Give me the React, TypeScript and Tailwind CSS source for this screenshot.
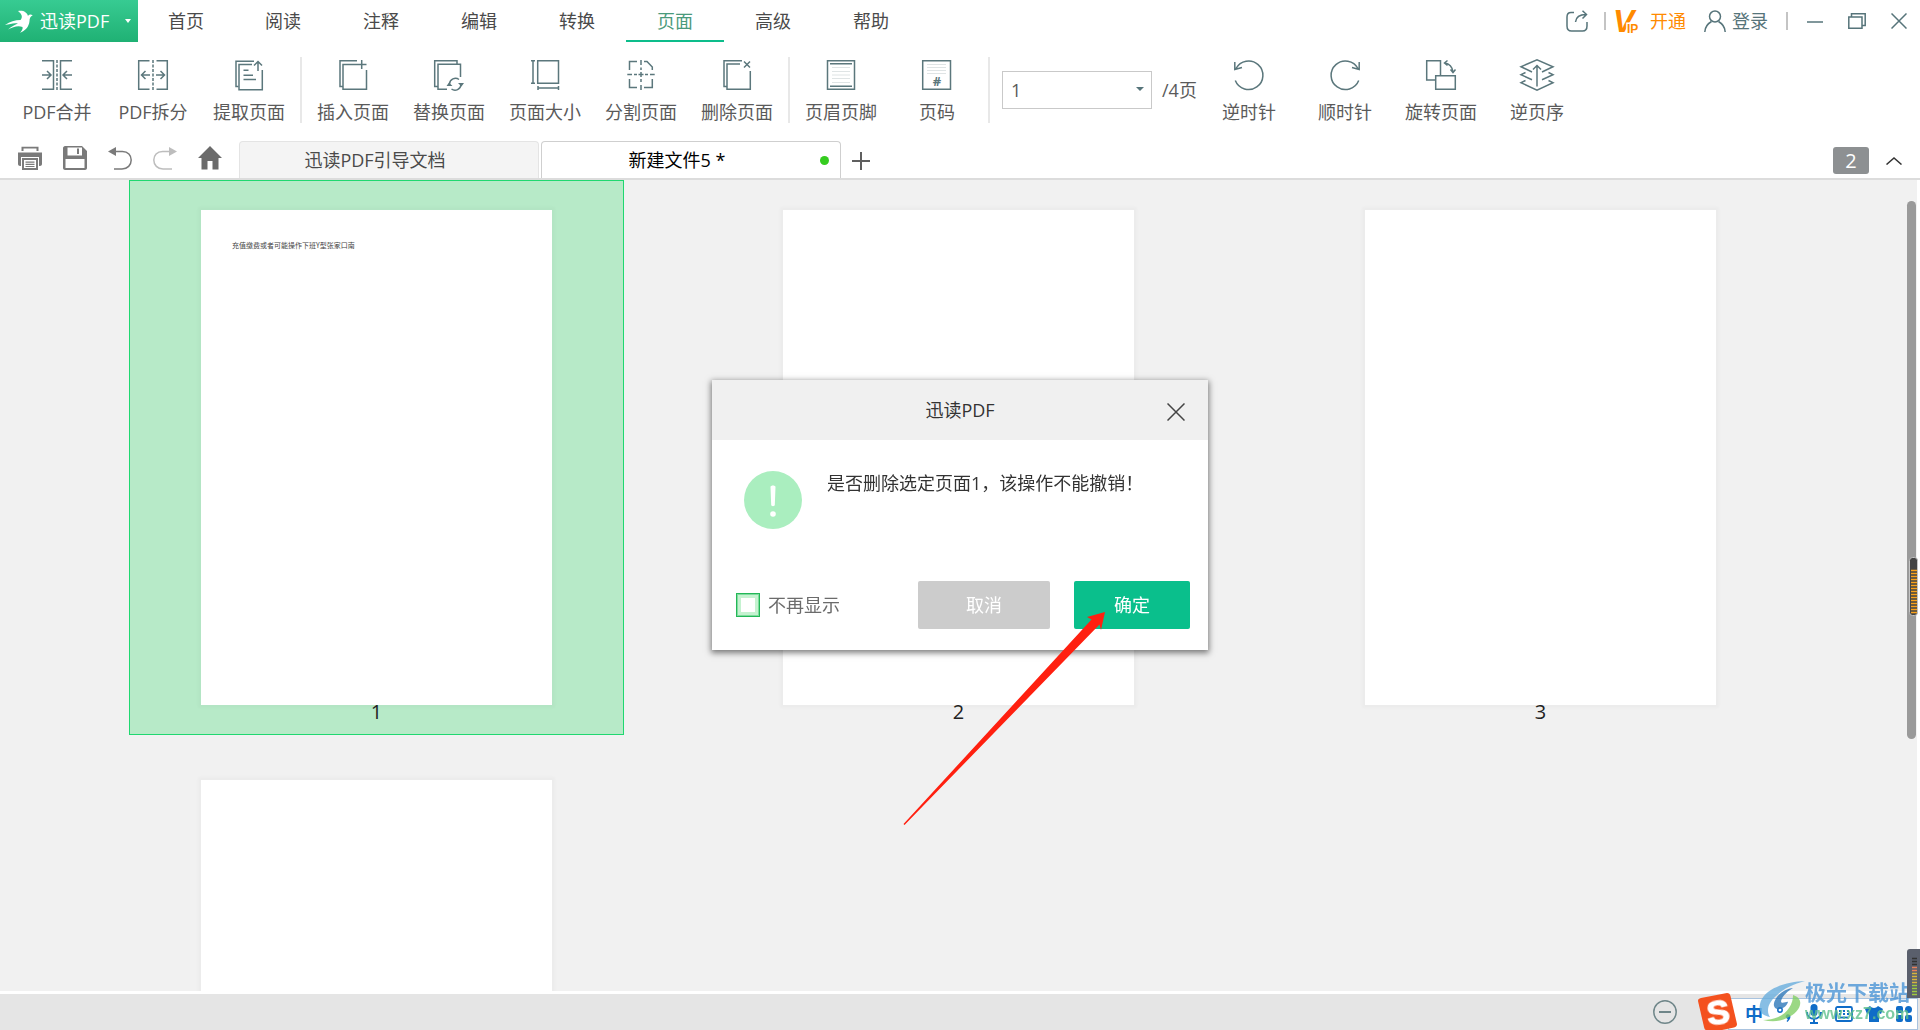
import { useState, type ReactNode } from 'react';

const MENUS = ['首页', '阅读', '注释', '编辑', '转换', '页面', '高级', '帮助'];

function Icon({ children, wide = false }: { children: ReactNode; wide?: boolean }) {
  return (
    <svg
      className={wide ? 'h-[30px] w-[34px]' : 'h-[30px] w-[30px]'}
      viewBox={wide ? '0 1 34 30' : '0 0 30 30'}
      overflow="visible"
      fill="none"
      stroke="#5b777c"
      strokeWidth="1.5"
      aria-hidden="true"
    >
      {children}
    </svg>
  );
}

const splitTools = [
  {
    label: 'PDF合并',
    icon: (
      <Icon>
        <path d="M0 .7H11.5V29.3H0M30 .7H18.5V29.3H30" />
        <path d="M15 0V30" strokeDasharray="3 1.5" />
        <path d="M0 15H8.5M5 11L9 15L5 19M30 15H21.5M25 11L21 15L25 19" />
      </Icon>
    ),
  },
  {
    label: 'PDF拆分',
    icon: (
      <Icon>
        <path d="M11.5 .7H.7V29.3H11.5M18.5 .7H29.3V29.3H18.5" />
        <path d="M15 0V30" strokeDasharray="3 1.5" />
        <path d="M12 15H4M7.500 11L3.500 15L7.500 19M18 15H26M22.500 11L26.500 15L22.500 19" />
      </Icon>
    ),
  },
  {
    label: '提取页面',
    icon: (
      <Icon>
        <path d="M20 1.200H2V26.500H4.500" />
        <path d="M18 4.500H5V29.800H28.300V10" />
        <path d="M24 11V2M20 5.500L24 1.500L28 5.500M9.500 10.300H14.500M9.500 15.300H19M9.500 19.500H22" />
      </Icon>
    ),
  },
];

const editTools = [
  {
    label: '插入页面',
    icon: (
      <Icon>
        <path d="M19 .7H2V26.500H5" />
        <path d="M19 4.500H5V29.300H28.500V10M23.700 0V9M19 4.500H28.500" />
      </Icon>
    ),
  },
  {
    label: '替换页面',
    icon: (
      <Icon>
        <path d="M23 4V.7H.7V26.500H4" />
        <path d="M26.500 17V4.300H4V29.300H13" />
        <path d="M15.500 24A6 6 0 0 1 25 19.500M27 24.500A6 6 0 0 1 17.500 29" />
        <path d="M24 23H30L27.500 26.500ZM12.500 26H18.500L15 22.500Z" fill="#5b777c" stroke="none" />
      </Icon>
    ),
  },
  {
    label: '页面大小',
    icon: (
      <Icon>
        <path d="M7.700 .7H28.500V23.300H7.700ZM3 .7V23.300M1 .7H5M1 23.300H5M8 28H28.500M8 26V30M28.500 26V30" />
      </Icon>
    ),
  },
  {
    label: '分割页面',
    icon: (
      <Icon>
        <path d="M3.500 10V1.500H11M18 1.500H21L26.300 7V10M3.500 19V27.500H11M18 27.500H26.300V19" />
        <path d="M15 0V5M15 7.500V10M15 12V17M15 19V22M15 25V30M1.300 14.500H6M8 14.500H11M12.500 14.500H17.500M19 14.500H22M24 14.500H28.700" />
      </Icon>
    ),
  },
  {
    label: '删除页面',
    icon: (
      <Icon>
        <path d="M20 .7H2V26.500H5" />
        <path d="M18 4H5V29.300H28.300V11M22 1.500L28 7.500M28 1.500L22 7.500" />
      </Icon>
    ),
  },
];

const markTools = [
  {
    label: '页眉页脚',
    icon: (
      <Icon>
        <path d="M1.500 .7H28.500V29.300H1.500Z" />
        <path d="M4 3.700H26M4 26.300H26" />
        <path d="M6 7.500H24M6 11.500H24M6 15H24M6 18.500H24M6 22.500H24" stroke="#dfe4e5" strokeWidth="1" />
      </Icon>
    ),
  },
  {
    label: '页码',
    icon: (
      <Icon>
        <path d="M.7 .7H28.500V29.300H.7Z" />
        <path d="M5 4.500H24M5 7.500H24M5 10.500H24M5 13.500H24" stroke="#dfe4e5" strokeWidth="1" />
        <text x="15" y="26" textAnchor="middle" fontSize="13" fontWeight="700" fill="#5b777c" stroke="none">
          #
        </text>
      </Icon>
    ),
  },
];

const rotateTools = [
  {
    label: '逆时针',
    icon: (
      <Icon>
        <path d="M1.300 20.500A14.300 14.300 0 1 0 2 8.500M.8 2V9.500L8 7.500" />
      </Icon>
    ),
  },
  {
    label: '顺时针',
    icon: (
      <Icon>
        <path d="M28.700 20.500A14.300 14.300 0 1 1 28 8.500M29.200 2V9.500L22 7.500" />
      </Icon>
    ),
  },
  {
    label: '旋转页面',
    icon: (
      <Icon>
        <path d="M9 20H.7V.7H14.500V15.500M9.700 15.700H29.300V29.300H9.700Z" />
        <path d="M19 3C23 3.500 26.500 7 27 12M21.500 .5L18.500 3L21.500 5.500M24.500 9.500L27 12.500L29.500 9.500" />
      </Icon>
    ),
  },
  {
    label: '逆页序',
    icon: (
      <Icon wide>
        <path d="M12 13L1 7.700L17 .8L33 7.700L22 13M5.500 13.500L1 15.700L12 20.700M28.500 13.500L33 15.700L22 20.700M5.500 21.500L1 23.700L17 31.200L33 23.700L28.500 21.500M17 27.500V6.500M13 10.500L17 6.500L21 10.500" />
      </Icon>
    ),
  },
];

function ToolGroup({ tools }: { tools: { label: string; icon: ReactNode }[] }) {
  return (
    <div className="flex shrink-0 pt-1.5">
      {tools.map((t) => (
        <button key={t.label} type="button" className="flex w-24 flex-col items-center gap-2 text-[#5a5a5a]">
          {t.icon}
          <span className="leading-7">{t.label}</span>
        </button>
      ))}
    </div>
  );
}

function Separator() {
  return <div className="mx-[3px] h-[66px] w-0.5 shrink-0 bg-[#e8e8e8]" />;
}

function TitleBar() {
  return (
    <header className="flex h-[42px] shrink-0">
      <button
        type="button"
        className="flex w-[138px] shrink-0 items-center bg-gradient-to-b from-[#37cb92] to-[#1fb174] pl-1 text-white"
      >
        <svg className="h-6 w-8" viewBox="0 0 32 24" fill="#fff" aria-hidden="true">
          <path d="M14 2C19 1 23 3 24 7C25 5.500 27 5 28.700 6.500C26.500 7.500 25.500 9 25.500 12C25 18 21 22 16 23.700C18 21.500 19 20 18.500 18C14 16 9 18 4 20.500C8 17 11 16 14 14.500C10 13.500 6 15 1 16C6 12.500 11 11 16.500 11C19 8 18 5 14 2Z" />
        </svg>
        <span className="ml-1">迅读PDF</span>
        <svg className="ml-4 h-1 w-1.5" viewBox="0 0 6 4" fill="#fff" aria-hidden="true">
          <path d="M0 0H6L3 4Z" />
        </svg>
      </button>
      <nav className="flex text-[#4a4a4a]">
        {MENUS.map((m) => (
          <button
            key={m}
            type="button"
            className={`w-[98px] border-b-2 pt-0.5 first:w-24 ${
              m === '页面' ? 'border-[#0dbd8b] text-[#4a9a7c]' : 'border-transparent'
            }`}
          >
            {m}
          </button>
        ))}
      </nav>
      <div className="ml-auto flex items-center pr-[13px] text-[#56747a]">
        <button type="button" aria-label="分享">
          <svg className="h-[22px] w-[22px]" viewBox="0 0 22 22" fill="none" stroke="#56747a" strokeWidth="1.5">
            <path d="M8 2.500H5C2 2.500 1 4.500 1 7V16C1 19 2.500 21 5.500 21H16.500C19.500 21 21 19 21 16V12" />
            <path d="M9.500 12C10 7 13 4.500 20 4.500M16.500 .8L20.500 4.500L16.500 8.500" />
          </svg>
        </button>
        <span className="ml-4 h-[18px] w-0.5 bg-[#c4c4c4]" />
        <button type="button" className="ml-2 flex items-center gap-2 text-[#ff8a00]">
          <svg className="h-6 w-7" viewBox="0 0 28 24" fill="#ff8a00" overflow="visible" aria-hidden="true">
            <text x="-1" y="23" fontFamily="Liberation Sans" fontSize="32" fontWeight="700" fontStyle="italic">
              V
              <tspan x="13" y="24" fontSize="12" fontStyle="normal" stroke="#fff" strokeWidth="3" paintOrder="stroke">
                IP
              </tspan>
            </text>
          </svg>
          <span>开通</span>
        </button>
        <button type="button" className="ml-[18px] flex items-center gap-1.5">
          <svg className="h-[22px] w-[22px]" viewBox="0 0 22 22" fill="none" stroke="#56747a" strokeWidth="1.5" aria-hidden="true">
            <circle cx="11" cy="6.500" r="5.500" />
            <path d="M.8 22C1 16 4 13.500 7.500 11.500M21.200 22C21 16 18 13.500 14.500 11.500" />
          </svg>
          <span>登录</span>
        </button>
        <span className="ml-[18px] h-[18px] w-0.5 bg-[#c4c4c4]" />
        <button type="button" aria-label="最小化" className="ml-[19px]">
          <svg className="h-4 w-4" viewBox="0 0 16 16" stroke="#56747a" strokeWidth="1.500">
            <path d="M0 9H16" />
          </svg>
        </button>
        <button type="button" aria-label="还原" className="ml-[25px]">
          <svg className="h-4 w-[18px]" viewBox="0 0 18 16" fill="none" stroke="#56747a" strokeWidth="1.500">
            <path d="M.8 4H14V15.200H.8ZM3.500 4V.8H17.200V12.500H14" />
          </svg>
        </button>
        <button type="button" aria-label="关闭" className="ml-[25px]">
          <svg className="h-4 w-4" viewBox="0 0 16 16" stroke="#56747a" strokeWidth="1.500">
            <path d="M.5 .5L15.500 15.500M15.500 .5L.5 15.500" />
          </svg>
        </button>
      </div>
    </header>
  );
}

function Ribbon() {
  const [page, setPage] = useState('1');
  return (
    <div className="flex h-24 shrink-0 items-center pl-[9px]">
      <ToolGroup tools={splitTools} />
      <Separator />
      <ToolGroup tools={editTools} />
      <Separator />
      <ToolGroup tools={markTools} />
      <Separator />
      <div className="flex w-52 shrink-0 items-center pl-[9px] text-[#5a5a5a]">
        <div className="relative">
          <select
            aria-label="页码"
            value={page}
            onChange={(e) => setPage(e.target.value)}
            className="block h-[38px] w-[150px] appearance-none border border-[#c9c9c9] bg-white pl-2 outline-none"
          >
            <option>1</option>
            <option>2</option>
            <option>3</option>
            <option>4</option>
          </select>
          <svg className="pointer-events-none absolute top-4 right-2 h-1 w-2" viewBox="0 0 8 4" fill="#56747a">
            <path d="M0 0H8L4 4Z" />
          </svg>
        </div>
        <span className="ml-2.5">/4页</span>
      </div>
      <ToolGroup tools={rotateTools} />
    </div>
  );
}

function TabBar() {
  return (
    <div className="flex h-[42px] shrink-0 border-b-2 border-[#dcdcdc] pt-[3px]">
      <div className="flex w-[239px] shrink-0 items-center gap-[21px] pb-1 pl-[18px]">
        <button type="button" aria-label="打印">
          <svg className="h-6 w-6" viewBox="0 0 24 24" fill="#7a7a7a">
            <path d="M3.500 5V.7H20.500V5H18.500V2.500H5.500V5ZM0 6.500H24V18C24 19 23 20 22 20H21V11H3V20H2C1 20 0 19 0 18Z" />
            <path d="M4 12H20V24H4ZM6 14V22H18V14ZM7.500 15.500H16.500V16.700H7.500ZM7.500 17.700H16.500V18.900H7.500ZM7.500 20H16.500V21H7.500Z" fillRule="evenodd" />
          </svg>
        </button>
        <button type="button" aria-label="保存">
          <svg className="h-6 w-6" viewBox="0 0 24 24" fill="#7a7a7a">
            <path d="M2 0H19L24 5V22C24 23 23 24 22 24H2C1 24 0 23 0 22V2C0 1 1 0 2 0ZM4.500 1.500V9.500H19V1.500ZM14 2.500H16V8H14ZM2.500 13V22H21.500V13Z" fillRule="evenodd" />
          </svg>
        </button>
        <button type="button" aria-label="撤销">
          <svg className="h-6 w-6" viewBox="0 0 24 24" fill="none" stroke="#7a7a7a" strokeWidth="1.500">
            <path d="M6 5.500H14.500C20 5.500 23.200 9.500 23.200 14C23.200 19 19.500 23 14 23H6" />
            <path d="M0 5.500L8 1V10Z" fill="#7a7a7a" stroke="none" />
          </svg>
        </button>
        <button type="button" aria-label="重做">
          <svg className="h-6 w-6" viewBox="0 0 24 24" fill="none" stroke="#bdbdbd" strokeWidth="1.500">
            <path d="M18 5.500H9.500C4 5.500 .8 9.500 .8 14C.8 19 4.500 23 10 23H19" />
            <path d="M24 5.500L16 1V10Z" fill="#bdbdbd" stroke="none" />
          </svg>
        </button>
        <button type="button" aria-label="主页">
          <svg className="h-6 w-6" viewBox="0 0 24 24" fill="#6b6b6b">
            <path d="M12 0L24 12H20.500V23.500H14.500V15H9.500V23.500H3.500V12H0Z" />
          </svg>
        </button>
      </div>
      <button
        type="button"
        className="w-[300px] shrink-0 rounded-t border border-b-0 border-[#e4e4e4] bg-[#f4f4f4] pr-7 text-[#4a4a4a]"
      >
        迅读PDF引导文档
      </button>
      <button
        type="button"
        className="relative ml-0.5 w-[300px] shrink-0 rounded-t border border-b-0 border-[#cfcfcf] bg-white pr-7 text-black"
      >
        新建文件5 *
        <span className="absolute top-3.5 right-[11px] h-[9px] w-[9px] rounded-full bg-[#35cc1f]" />
      </button>
      <button type="button" aria-label="新建标签" className="ml-[11px] pt-0.5">
        <svg className="h-[18px] w-[18px]" viewBox="0 0 18 18" stroke="#5f5f5f" strokeWidth="2">
          <path d="M9 0V18M0 9H18" />
        </svg>
      </button>
      <div className="ml-auto flex items-center gap-[17px] pt-0.5 pr-[18px]">
        <span className="flex h-[27px] w-9 items-center justify-center rounded-[3px] bg-[#8d9092] text-xl text-white">2</span>
        <button type="button" aria-label="收起">
          <svg className="h-2 w-4" viewBox="0 0 16 8" fill="none" stroke="#333" strokeWidth="1.500">
            <path d="M.5 7.500L8 1L15.500 7.500" />
          </svg>
        </button>
      </div>
    </div>
  );
}

function Thumbnail({ page, selected = false }: { page: number; selected?: boolean }) {
  return (
    <div
      className={`flex h-[555px] w-[495px] flex-col items-center border pt-[29px] ${
        selected ? 'border-[#1fd870] bg-[#b7eac8]' : 'border-transparent'
      }`}
    >
      <div className="h-[495px] w-[351px] shrink-0 bg-white shadow-[0_0_3px_3px_rgba(0,0,0,0.025)]">
        {page === 1 && (
          <p className="pt-[29px] pl-[31px] text-[7px] leading-3 font-[Noto_Sans_CJK_SC] text-[#444]">
            充值缴费或者可能操作下班Y型张家口南
          </p>
        )}
      </div>
      <span className="text-xl leading-[14px] text-[#222]">{page}</span>
    </div>
  );
}

function Workspace() {
  return (
    <main className="flex min-h-0 flex-1 pr-[3px]">
      <div className="relative flex-1 overflow-hidden bg-[#f1f1f1]">
        <div className="grid grid-cols-[repeat(3,495px)] justify-center gap-x-[87px] gap-y-[15px]">
          <Thumbnail page={1} selected />
          <Thumbnail page={2} />
          <Thumbnail page={3} />
          <Thumbnail page={4} />
        </div>
        <div className="absolute top-[21px] right-px h-[538px] w-[9px] rounded-full bg-[#9a9a9a]" />
      </div>
    </main>
  );
}

function StatusBar() {
  return (
    <footer className="flex h-[39px] shrink-0 items-center justify-end border-t-[3px] border-white bg-[#e5e5e5] pr-[243px]">
      <button type="button" aria-label="缩小">
        <svg className="h-6 w-6" viewBox="0 0 24 24" fill="none" stroke="#6f8689" strokeWidth="1.500">
          <circle cx="12" cy="12" r="11.200" />
          <path d="M6 12H18" strokeWidth="2" />
        </svg>
      </button>
    </footer>
  );
}

function ConfirmDialog() {
  const [hide, setHide] = useState(false);
  return (
    <div className="fixed inset-0 z-10 flex items-center justify-center">
      <div
        role="dialog"
        aria-labelledby="dialog-title"
        className="relative w-[496px] bg-white shadow-[0_2px_6px_1px_rgba(0,0,0,0.5)]"
      >
        <div className="grid h-[60px] grid-cols-[1fr_auto_1fr] items-center bg-[#f0f0f0] text-[#333]">
          <h2 id="dialog-title" className="col-start-2">
            迅读PDF
          </h2>
          <button type="button" aria-label="关闭" className="mr-[23px] justify-self-end pt-1">
            <svg className="h-[18px] w-[18px]" viewBox="0 0 18 18" stroke="#444" strokeWidth="1.500">
              <path d="M.5 .5L17.500 17.500M17.500 .5L.5 17.500" />
            </svg>
          </button>
        </div>
        <div className="flex h-[141px] gap-[25px] pt-[31px] pl-8">
          <svg className="h-[58px] w-[58px]" viewBox="0 0 58 58" aria-hidden="true">
            <circle cx="29" cy="29" r="29" fill="#aaeebf" />
            <path d="M26.500 16C26.500 14 31.500 14 31.500 16L30.800 34C30.800 35.500 27.200 35.500 27.200 34Z" fill="#fff" />
            <circle cx="29" cy="43" r="2.800" fill="#fff" />
          </svg>
          <p className="leading-6 text-[#333]">是否删除选定页面1，该操作不能撤销！</p>
        </div>
        <div className="flex items-center pr-[18px] pb-[21px] pl-6 text-white">
          <label className="flex items-center gap-2 text-[#6b6b6b]">
            <input
              type="checkbox"
              checked={hide}
              onChange={(e) => setHide(e.target.checked)}
              className="h-6 w-6 appearance-none border border-[#23b757] bg-white shadow-[inset_0_0_0_1px_#7fdc9e,inset_0_0_0_4px_#c5f2d0] checked:bg-[#23b757]"
            />
            不再显示
          </label>
          <button type="button" className="ml-auto h-12 w-33 rounded-xs bg-[#ccc]">
            取消
          </button>
          <button type="button" className="ml-6 h-12 w-29 rounded-xs bg-[#0abf8c]">
            确定
          </button>
        </div>
        {/* pointer to the confirm button */}
        <svg
          className="pointer-events-none absolute top-[230px] left-[190px] h-[216px] w-[206px]"
          viewBox="0 0 206 216"
          fill="#ff2010"
          aria-hidden="true"
        >
          <path d="M203 2L185 7L189.500 9.500L1.500 214L2.500 215L197.500 14.500L199 20Z" />
        </svg>
      </div>
    </div>
  );
}

function LevelMeters() {
  const bars = Array.from({ length: 15 }, (_, i) => i);
  return (
    <>
      <svg className="fixed top-[557px] right-[2px] z-20 h-[59px] w-[9px]" viewBox="0 0 9 59" aria-hidden="true">
        <rect x=".5" y=".5" width="8" height="58" rx="3" fill="#444" stroke="#c4c4c4" />
        {bars.map((i) => (
          <path key={i} d={`M2 ${13.5 + i * 3}H8`} stroke="#f9a11b" strokeWidth="1.500" />
        ))}
      </svg>
      <svg className="fixed right-0 bottom-8 z-20 h-[49px] w-[13px]" viewBox="0 0 13 49" aria-hidden="true">
        <path d="M13 0H3C1 0 0 1 0 3V49H13Z" fill="#5a5f6c" />
        {bars.slice(0, 13).map((i) => (
          <path
            key={i}
            d={`M5 ${9.5 + i * 3}H10`}
            stroke={i < 3 ? '#333' : i < 5 ? '#e8805a' : i < 9 ? '#d8b43c' : '#9fca3f'}
            strokeWidth="1.500"
          />
        ))}
      </svg>
    </>
  );
}

function InputMethodBar() {
  return (
    <div className="fixed right-0 bottom-0 z-10 flex items-end text-[#0f6cc8]">
      <svg className="z-10 -mr-2.5 h-[37px] w-10" viewBox="0 0 40 37" overflow="visible" aria-hidden="true">
        <path d="M3 5L29 0C31 0 32 1 32.500 3L39 31C39 33 38 34 36 34.500L24 37H8C7 37 6.500 36 6 34L0 8C0 6 1 5.500 3 5Z" fill="#f4511e" />
        <text
          x="20"
          y="31"
          textAnchor="middle"
          fontFamily="Liberation Sans"
          fontSize="34"
          fontWeight="700"
          fill="#fff"
          stroke="#fff"
          strokeWidth="1.500"
          transform="rotate(-8 20 19)"
        >
          S
        </text>
      </svg>
      <div className="mr-0.5 flex h-8 w-[190px] items-center justify-end gap-3 border border-[#a9c3df] bg-white pr-1">
        <span className="w-[18px] font-bold">中</span>
        <svg className="h-4 w-[18px]" viewBox="0 0 18 16" fill="#0f6cc8" aria-hidden="true">
          <circle cx="5" cy="4" r="2.200" fill="none" stroke="#0f6cc8" strokeWidth="1.500" />
          <path d="M12 8.500C16 7.500 17 12 12.500 16L11.500 15C13 14 13 13 12 12.500C10 11.500 10.500 9 12 8.500Z" />
        </svg>
        <svg className="h-5 w-[18px]" viewBox="0 0 18 20" aria-hidden="true">
          <rect x="5.500" y="0" width="7" height="12" rx="3.500" fill="#0f6cc8" />
          <path d="M2 8C2 17 16 17 16 8M9 15V19M5 19H13" fill="none" stroke="#0f6cc8" strokeWidth="2" />
        </svg>
        <svg className="h-4 w-[18px]" viewBox="0 0 18 16" fill="none" stroke="#0f6cc8" strokeWidth="1.800" aria-hidden="true">
          <rect x="1" y="1" width="16" height="14" rx="1.500" />
          <path d="M4 5H14M4 8H14" strokeDasharray="2 2" />
          <path d="M5 11.500H13" />
        </svg>
        <svg className="h-4 w-[18px]" viewBox="0 0 18 16" fill="#0f6cc8" aria-hidden="true">
          <path d="M5 0C7 2.500 11 2.500 13 0L18 3L16 8L14 7V16H4V7L2 8L0 3Z" />
        </svg>
        <svg className="h-4 w-[18px]" viewBox="0 0 18 16" fill="#0f6cc8" aria-hidden="true">
          <rect x="1" width="7" height="7" rx="2" />
          <circle cx="13.500" cy="3.500" r="3.500" />
          <rect x="1" y="9" width="7" height="7" rx="2" />
          <rect x="10" y="9" width="7" height="7" rx="2" />
        </svg>
      </div>
    </div>
  );
}

function Watermark() {
  return (
    <div className="pointer-events-none fixed right-2.5 bottom-1.5 z-10 flex items-center font-bold opacity-80">
      <svg className="h-[42px] w-[46px]" viewBox="0 0 46 42" aria-hidden="true">
        <path d="M46 0C27 1 5 7 1 23C-1 31 4 35 11 36C7 30 9 22 17 15C25 7 35 3 46 0Z" fill="#69aede" />
        <path d="M34 7C23 8 14 18 15 25C17 31 27 28 29 21C28 20 22 24 22 20C24 14 29 10 34 7Z" fill="#2f78ba" />
        <path d="M34 14C47 18 41 32 28 37C20 41 12 41 4 39C15 39 25 35 30 27C33 23 34 18 34 14Z" fill="#83cf66" />
      </svg>
      <div className="flex flex-col">
        <span className="text-[21px] leading-6 text-[#4b95d6]">极光下载站</span>
        <span className="font-[Liberation_Sans] text-base leading-5 text-[#5fc08c]">www.xz7.com</span>
      </div>
    </div>
  );
}

export default function App() {
  return (
    <div className="flex h-screen min-w-[1700px] flex-col overflow-hidden bg-white font-['Open_Sans','Noto_Sans_CJK_SC',sans-serif] text-lg font-normal">
      <TitleBar />
      <Ribbon />
      <TabBar />
      <Workspace />
      <StatusBar />
      <ConfirmDialog />
      <InputMethodBar />
      <Watermark />
      <LevelMeters />
    </div>
  );
}
